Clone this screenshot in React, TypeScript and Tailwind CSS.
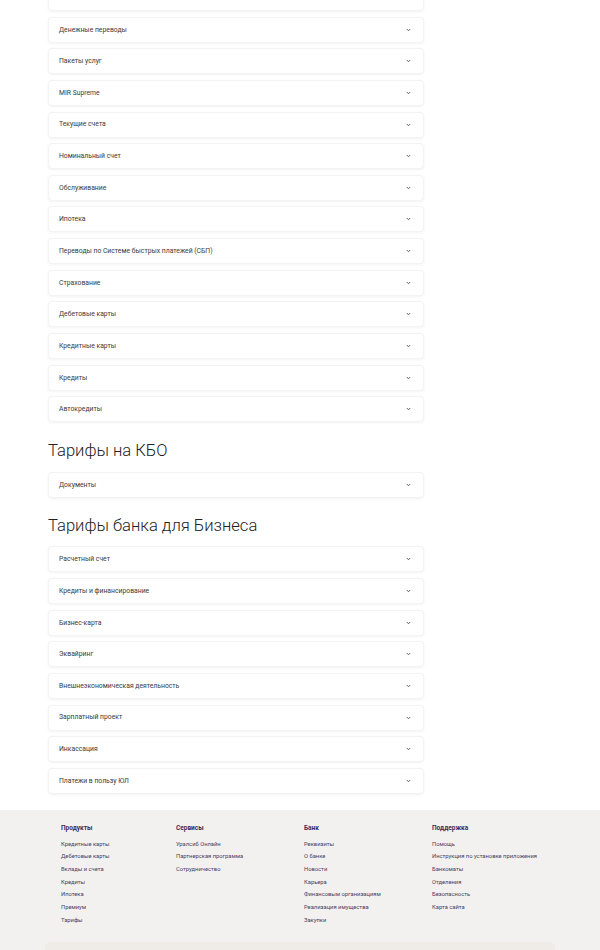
const personal = [
  'Накопительные счета',
  'Денежные переводы',
  'Пакеты услуг',
  'MIR Supreme',
  'Текущие счета',
  'Номинальный счет',
  'Обслуживание',
  'Ипотека',
  'Переводы по Системе быстрых платежей (СБП)',
  'Страхование',
  'Дебетовые карты',
  'Кредитные карты',
  'Кредиты',
  'Автокредиты',
];

const business = [
  'Расчетный счет',
  'Кредиты и финансирование',
  'Бизнес-карта',
  'Эквайринг',
  'Внешнеэкономическая деятельность',
  'Зарплатный проект',
  'Инкассация',
  'Платежи в пользу ЮЛ',
];

const footer = [
  {
    title: 'Продукты',
    width: 'w-[115px]',
    links: ['Кредитные карты', 'Дебетовые карты', 'Вклады и счета', 'Кредиты', 'Ипотека', 'Премиум', 'Тарифы'],
  },
  {
    title: 'Сервисы',
    width: 'w-[128px]',
    links: ['Уралсиб Онлайн', 'Партнерская программа', 'Сотрудничество'],
  },
  {
    title: 'Банк',
    width: 'w-[128px]',
    links: [
      'Реквизиты',
      'О банке',
      'Новости',
      'Карьера',
      'Финансовым организациям',
      'Реализация имущества',
      'Закупки',
    ],
  },
  {
    title: 'Поддержка',
    width: 'w-[130px]',
    links: [
      'Помощь',
      'Инструкция по установке приложения',
      'Банкоматы',
      'Отделения',
      'Безопасность',
      'Карта сайта',
    ],
  },
];

function Chevron() {
  return (
    <svg width="5" height="4" viewBox="0 0 5 4" className="shrink-0">
      <path d="M0.8 1 L2.5 2.8 L4.2 1" fill="none" stroke="#555" strokeWidth="0.9" />
    </svg>
  );
}

function Item({ label }: { label: string }) {
  return (
    <div className="flex h-[26px] items-center justify-between rounded-[4px] border border-[#f3f3f3] bg-white pl-[10px] pr-[12px] shadow-[0_1px_3px_rgba(0,0,0,0.05)]">
      <span className="text-[6.8px] text-[#3a3a3a]">{label}</span>
      <Chevron />
    </div>
  );
}

export default function App() {
  return (
    <div className="min-h-[950px] bg-white font-['Roboto',sans-serif]">
      <div className="ml-[48px] mt-[-15px] w-[376px]">
        <div className="flex flex-col gap-[5.65px]">
          {personal.map((p) => (
            <Item key={p} label={p} />
          ))}
        </div>

        <h2 className="mb-[10px] mt-[18px] text-[16.6px] leading-[22px] font-light text-[#222]">Тарифы на КБО</h2>
        <Item label="Документы" />

        <h2 className="mb-[9px] mt-[17px] text-[16.6px] leading-[22px] font-light text-[#222]">
          Тарифы банка для Бизнеса
        </h2>
        <div className="flex flex-col gap-[5.65px]">
          {business.map((b) => (
            <Item key={b} label={b} />
          ))}
        </div>
      </div>

      <footer className="mt-[16.5px] bg-[#f3f1f0] pt-[14px]">
        <div className="ml-[61px] flex">
          {footer.map((col) => (
            <div key={col.title} className={col.width}>
              <div className="h-[9px] text-[6.5px] leading-[9px] font-bold text-[#3b2b58]">{col.title}</div>
              <div className="mt-[4.3px] flex flex-col">
                {col.links.map((l) => (
                  <div key={l} className="flex h-[12.7px] items-center text-[5.8px] whitespace-nowrap text-[#4a4060]">
                    {l}
                  </div>
                ))}
              </div>
            </div>
          ))}
        </div>
        <div className="mx-[45px] mt-[15.5px] h-[20px] rounded-t-[6px] bg-[#efebe6]" />
      </footer>
    </div>
  );
}
